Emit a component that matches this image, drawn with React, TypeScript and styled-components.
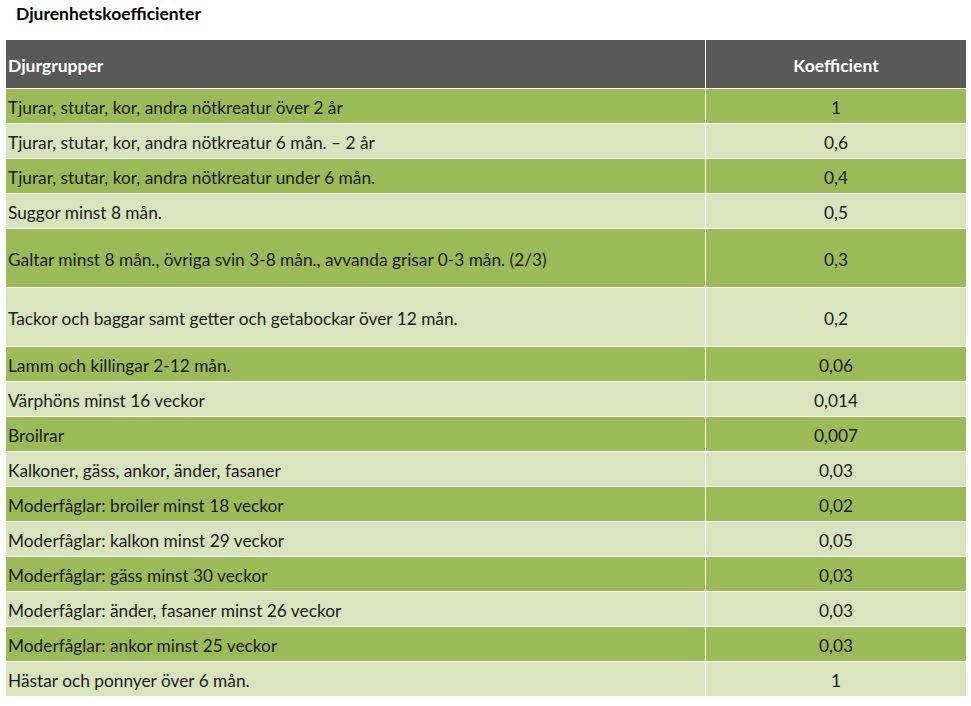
import React from "react";
import styled, { createGlobalStyle } from "styled-components";

const Global = createGlobalStyle`
  html, body { margin: 0; padding: 0; background: #ffffff; }
  body { font-family: Lato, "Open Sans", sans-serif; }
  * { box-sizing: border-box; }
`;

const Page = styled.div`
  width: 971px;
  height: 706px;
  padding: 3px 5px 0 6px;
  display: flex;
  flex-direction: column;
`;

const Title = styled.h1`
  margin: 0 0 0 10px;
  height: 37px;
  font-size: 17.5px;
  font-weight: 700;
  color: #000;
  line-height: 22px;
`;

const Table = styled.div`
  display: grid;
  grid-template-columns: 699px 261px;
  width: 960px;
`;

const HeadCell = styled.div<{ $center?: boolean }>`
  background: #595959;
  color: #ffffff;
  font-weight: 700;
  font-size: 17.5px;
  height: 49px;
  padding-top: 2px;
  display: flex;
  align-items: center;
  justify-content: ${(p) => (p.$center ? "center" : "flex-start")};
  padding-left: ${(p) => (p.$center ? "0" : "2px")};
  border-left: ${(p) => (p.$center ? "1px solid #fff" : "none")};
  border-bottom: 1px solid #fff;
`;

const Cell = styled.div<{ $dark: boolean; $tall?: boolean; $center?: boolean }>`
  background: ${(p) => (p.$dark ? "#9bbb59" : "#d7e4bd")};
  color: #1c1c1c;
  font-size: 17.3px;
  height: ${(p) => (p.$tall ? 59 : 35)}px;
  padding-top: 2px;
  display: flex;
  align-items: center;
  justify-content: ${(p) => (p.$center ? "center" : "flex-start")};
  padding-left: ${(p) => (p.$center ? "0" : "2px")};
  border-left: ${(p) => (p.$center ? "1px solid #fff" : "none")};
  border-bottom: 1px solid #fff;
`;

const rows: [string, string, boolean?][] = [
  ["Tjurar, stutar, kor, andra nötkreatur över 2 år", "1"],
  ["Tjurar, stutar, kor, andra nötkreatur 6 mån. – 2 år", "0,6"],
  ["Tjurar, stutar, kor, andra nötkreatur under 6 mån.", "0,4"],
  ["Suggor minst 8 mån.", "0,5"],
  ["Galtar minst 8 mån., övriga svin 3-8 mån., avvanda grisar 0-3 mån. (2/3)", "0,3", true],
  ["Tackor och baggar samt getter och getabockar över 12 mån.", "0,2", true],
  ["Lamm och killingar 2-12 mån.", "0,06"],
  ["Värphöns minst 16 veckor", "0,014"],
  ["Broilrar", "0,007"],
  ["Kalkoner, gäss, ankor, änder, fasaner", "0,03"],
  ["Moderfåglar: broiler minst 18 veckor", "0,02"],
  ["Moderfåglar: kalkon minst 29 veckor", "0,05"],
  ["Moderfåglar: gäss minst 30 veckor", "0,03"],
  ["Moderfåglar: änder, fasaner minst 26 veckor", "0,03"],
  ["Moderfåglar: ankor minst 25 veckor", "0,03"],
  ["Hästar och ponnyer över 6 mån.", "1"],
];

export default function App() {
  return (
    <>
      <Global />
      <Page>
        <Title>Djurenhetskoefficienter</Title>
        <Table>
          <HeadCell>Djurgrupper</HeadCell>
          <HeadCell $center>Koefficient</HeadCell>
          {rows.map(([name, val, tall], i) => (
            <React.Fragment key={i}>
              <Cell $dark={i % 2 === 0} $tall={tall}>{name}</Cell>
              <Cell $dark={i % 2 === 0} $tall={tall} $center>{val}</Cell>
            </React.Fragment>
          ))}
        </Table>
      </Page>
    </>
  );
}
